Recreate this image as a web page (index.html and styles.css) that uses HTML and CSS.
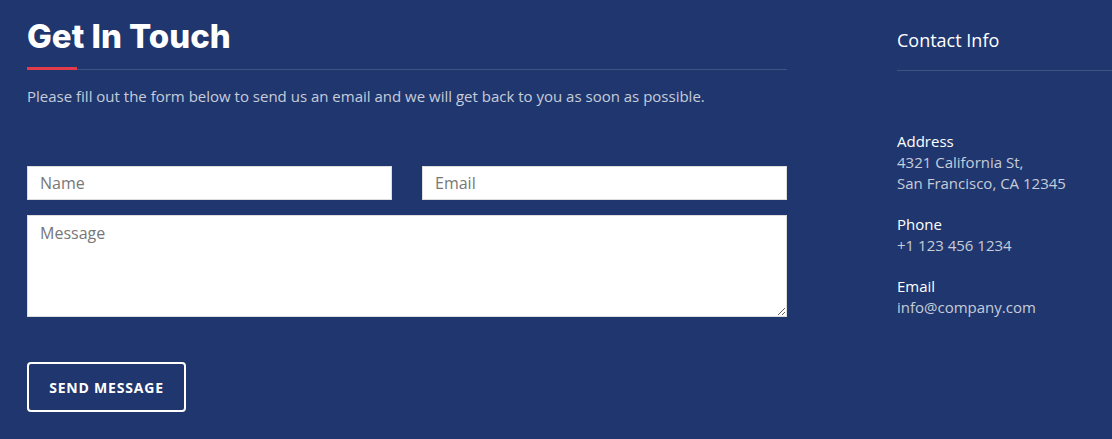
FILE: index.html
```html
<!DOCTYPE html>
<html lang="en">
<head>
<meta charset="utf-8">
<title>Get In Touch</title>
<link rel="stylesheet" href="styles.css">
</head>
<body>
<div class="contact">
  <div class="main">
    <div class="title">
      <h2>Get In Touch</h2>
    </div>
    <p class="lead">Please fill out the form below to send us an email and we will get back to you as soon as possible.</p>
    <form class="form">
      <div class="row">
        <input class="field" type="text" placeholder="Name">
        <input class="field" type="email" placeholder="Email">
      </div>
      <textarea class="field message" placeholder="Message"></textarea>
      <button class="btn" type="button">SEND MESSAGE</button>
    </form>
  </div>
  <aside class="info">
    <div class="info-title"><h3>Contact Info</h3></div>
    <div class="item">
      <div class="label">Address</div>
      <div class="value">4321 California St,<br>San Francisco, CA 12345</div>
    </div>
    <div class="item">
      <div class="label">Phone</div>
      <div class="value">+1 123 456 1234</div>
    </div>
    <div class="item">
      <div class="label">Email</div>
      <div class="value">info@company.com</div>
    </div>
  </aside>
</div>
</body>
</html>
```

FILE: styles.css
```css
html, body {
  margin: 0;
  padding: 0;
  background: #1f376e;
  height: 100%;
}
body {
  font-family: "Open Sans", "Liberation Sans", sans-serif;
  font-size: 15px;
  color: rgba(255,255,255,0.75);
  overflow: hidden;
}
.contact {
  display: flex;
  padding-left: 27px;
  gap: 110px;
}
.main {
  width: 760px;
  flex: none;
}
.title {
  position: relative;
  border-bottom: 1px solid rgba(255,255,255,0.15);
  padding-top: 16px;
  height: 70px;
  box-sizing: border-box;
}
.title::after {
  content: "";
  position: absolute;
  left: 0;
  bottom: -1px;
  width: 50px;
  height: 3px;
  background: #e23b4a;
}
.title h2 {
  margin: 0;
  font-family: "Inter", "Liberation Sans", sans-serif;
  font-weight: 800;
  font-size: 33px;
  line-height: 40px;
  color: #fff;
}
.lead {
  margin: 15px 0 0;
  line-height: 22px;
}
.form {
  margin-top: 59px;
  display: flex;
  flex-direction: column;
}
.row {
  display: flex;
  gap: 30px;
}
.field {
  display: block;
  box-sizing: border-box;
  width: 100%;
  height: 34px;
  border: 1px solid #ddd;
  border-radius: 0;
  background: #fff;
  padding: 6px 12px;
  font-family: "Open Sans", "Liberation Sans", sans-serif;
  font-size: 16px;
  color: #444;
  outline: none;
}
.field::placeholder {
  color: #777;
}
.message {
  margin-top: 15px;
  height: 102px;
  resize: vertical;
  padding-top: 6px;
}
.btn {
  align-self: flex-start;
  margin-top: 45px;
  width: 159px;
  height: 50px;
  background: transparent;
  border: 2px solid #fff;
  border-radius: 4px;
  color: #fff;
  font-family: "Open Sans", "Liberation Sans", sans-serif;
  font-weight: 700;
  font-size: 14px;
  letter-spacing: 0.8px;
  cursor: pointer;
}
.info {
  flex: 1;
  color: rgba(255,255,255,0.75);
}
.info-title {
  border-bottom: 1px solid rgba(255,255,255,0.15);
  height: 71px;
  box-sizing: border-box;
  padding-top: 28px;
}
.info-title h3 {
  margin: 0;
  font-weight: 400;
  font-size: 18px;
  line-height: 24px;
  color: #fff;
}
.item {
  margin-top: 20px;
  line-height: 21px;
}
.info-title + .item {
  margin-top: 60px;
}
.label {
  color: #fff;
}
```
